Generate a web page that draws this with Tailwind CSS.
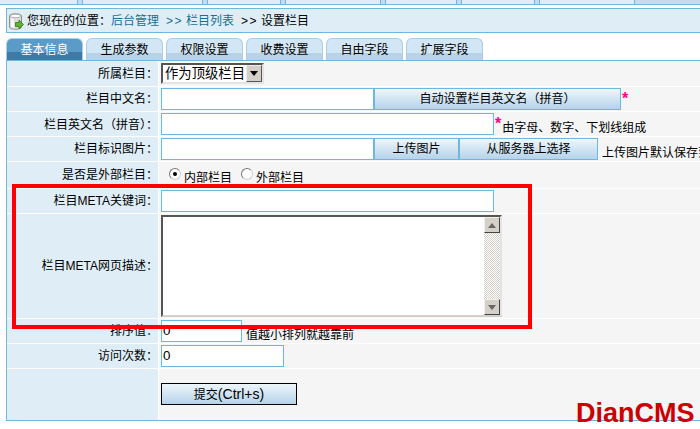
<!DOCTYPE html>
<html lang="zh-CN">
<head>
  <meta charset="UTF-8">
  <title>设置栏目</title>
  <script src="https://cdn.jsdelivr.net/npm/@tailwindcss/browser@4"></script>
</head>
<body class="relative w-[700px] h-[429px] overflow-hidden bg-white text-[12px] leading-[14px] text-black font-['Liberation_Sans','Noto_Sans_CJK_SC',sans-serif]">
  <!-- top frame strip -->
  <div class="flex h-[5px] border-b border-[#6cb8e0] bg-[#dfeef6]">
    <div class="w-[77px] h-[4px]"></div>
    <div class="w-[6px] h-[4px] bg-[#c5dcea] border-x border-[#6cb8e0]"></div>
    <div class="w-[119px] h-[4px]"></div>
    <div class="w-[6px] h-[4px] bg-[#c5dcea] border-x border-[#6cb8e0]"></div>
    <div class="w-[72px] h-[4px]"></div>
    <div class="w-[6px] h-[4px] bg-[#c5dcea] border-x border-[#6cb8e0]"></div>
    <div class="w-[94px] h-[4px]"></div>
    <div class="w-[6px] h-[4px] bg-[#c5dcea] border-x border-[#6cb8e0]"></div>
    <div class="w-[70px] h-[4px]"></div>
    <div class="w-[6px] h-[4px] bg-[#c5dcea] border-x border-[#6cb8e0]"></div>
    <div class="w-[72px] h-[4px]"></div>
    <div class="w-[6px] h-[4px] bg-[#c5dcea] border-x border-[#6cb8e0]"></div>
    <div class="w-[94px] h-[4px]"></div>
    <div class="flex-1 h-[4px] bg-[#c5dcea] border-l border-[#6cb8e0]"></div>
  </div>

  <!-- breadcrumb -->
  <div class="mt-[3px] ml-[6px] h-[25px] flex items-center border border-r-0 border-[#6cb8e0] bg-[#dfeef6] pl-[2px]">
    <svg width="18" height="18" viewBox="0 0 18 18" class="shrink-0 mt-[2px]">
      <path d="M.5 3c0-3 12-3 12 0v11c0 3-12 3-12 0z" fill="#dcdcdc" stroke="#8f8f8f"/>
      <path d="M2 5v9c1 1 2 1 3 1.300V6z" fill="#f7f7f7"/>
      <ellipse cx="6.500" cy="3" rx="5" ry="1.800" fill="#fff" stroke="#a0a0a0" stroke-width=".8"/>
      <path d="M6.500 9.500h3.500V7l4.500 4.500L10 16v-2.500H6.500z" fill="#62b032" stroke="#2f7a14" stroke-width=".8"/>
    </svg>
    <span>您现在的位置：</span>
    <a class="text-[#1a6e96]">后台管理</a>
    <span class="ml-[7px] text-[#1a6e96] tracking-[1.500px]">&gt;&gt;</span>
    <span class="ml-[3px] text-[#1a6e96]">栏目列表</span>
    <span class="ml-[7px] tracking-[1.500px]">&gt;&gt;</span>
    <span class="ml-[3px]">设置栏目</span>
  </div>

  <!-- tabs -->
  <div class="mt-[5px] ml-[6px] flex gap-[3px] h-[22px]">
    <div class="w-[77px] rounded-t-[6px] border border-b-0 border-[#a9cde4] bg-[linear-gradient(#5b9bc7_0,#5b9bc7_62%,#3e7aa5_62%,#3e7aa5_100%)] text-white text-center leading-[20px] pt-px">基本信息</div>
    <div class="w-[77px] rounded-t-[6px] border border-b-0 border-[#a9cde4] bg-[linear-gradient(#d3e6f5_0,#d3e6f5_65%,#b7d3e8_65%,#b7d3e8_100%)] text-center leading-[20px] pt-px">生成参数</div>
    <div class="w-[77px] rounded-t-[6px] border border-b-0 border-[#a9cde4] bg-[linear-gradient(#d3e6f5_0,#d3e6f5_65%,#b7d3e8_65%,#b7d3e8_100%)] text-center leading-[20px] pt-px">权限设置</div>
    <div class="w-[77px] rounded-t-[6px] border border-b-0 border-[#a9cde4] bg-[linear-gradient(#d3e6f5_0,#d3e6f5_65%,#b7d3e8_65%,#b7d3e8_100%)] text-center leading-[20px] pt-px">收费设置</div>
    <div class="w-[77px] rounded-t-[6px] border border-b-0 border-[#a9cde4] bg-[linear-gradient(#d3e6f5_0,#d3e6f5_65%,#b7d3e8_65%,#b7d3e8_100%)] text-center leading-[20px] pt-px">自由字段</div>
    <div class="w-[77px] rounded-t-[6px] border border-b-0 border-[#a9cde4] bg-[linear-gradient(#d3e6f5_0,#d3e6f5_65%,#b7d3e8_65%,#b7d3e8_100%)] text-center leading-[20px] pt-px">扩展字段</div>
  </div>

  <!-- form table -->
  <div class="ml-[6px] h-[361px] border border-r-0 border-[#6cb8e0] bg-white flex flex-col gap-px">
    <div class="flex h-[25px]">
      <div class="w-[151px] shrink-0 bg-[#dfeef6] mr-px flex items-center justify-end pt-px">所属栏目：</div>
      <div class="flex-1 bg-[#f5f5f5] pl-[2px] pt-[2px]">
        <div class="w-[103px] h-[21px] flex items-center border-2 border-t-[#555] border-l-[#555] border-r-[#e4e4e4] border-b-[#e4e4e4] bg-white pl-[2px] text-[13.330px]">
          <span class="flex-1 whitespace-nowrap">作为顶级栏目</span>
          <span class="w-[16px] h-[17px] shrink-0 bg-[#d4d0c8] border border-[#555] border-t-[#eee] border-l-[#eee] flex items-center justify-center">
            <svg width="8" height="5" viewBox="0 0 8 5"><path d="M0 0h8L4 5z" fill="#000"/></svg>
          </span>
        </div>
      </div>
    </div>
    <div class="flex h-[24px]">
      <div class="w-[151px] shrink-0 bg-[#dfeef6] mr-px flex items-center justify-end">栏目中文名：</div>
      <div class="flex-1 bg-[#f5f5f5] pl-[2px] pt-px flex items-start">
        <div class="w-[213px] h-[22px] border border-[#6cb8e0] bg-white"></div>
        <div class="w-[247px] h-[22px] border border-[#6cb8e0] bg-[linear-gradient(#eef6fb,#b5d3ea)] text-center leading-[20px]">自动设置栏目英文名（拼音）</div>
        <span class="ml-px pt-[4px] text-[16px] font-bold text-[#ff0080]">*</span>
      </div>
    </div>
    <div class="flex h-[24px]">
      <div class="w-[151px] shrink-0 bg-[#dfeef6] mr-px flex items-center justify-end pt-px">栏目英文名（拼音）：</div>
      <div class="flex-1 bg-[#f5f5f5] pl-[2px] pt-px flex items-start">
        <div class="w-[333px] h-[22px] border border-[#6cb8e0] bg-white"></div>
        <span class="ml-px pt-[4px] text-[16px] font-bold text-[#ff0080]">*</span>
        <span class="ml-px pt-[8px]">由字母、数字、下划线组成</span>
      </div>
    </div>
    <div class="flex h-[24px]">
      <div class="w-[151px] shrink-0 bg-[#dfeef6] mr-px flex items-center justify-end">栏目标识图片：</div>
      <div class="flex-1 bg-[#f5f5f5] pl-[2px] pt-px flex items-start whitespace-nowrap">
        <div class="w-[213px] h-[22px] shrink-0 border border-[#6cb8e0] bg-white"></div>
        <div class="w-[85px] h-[22px] shrink-0 border border-[#6cb8e0] bg-[linear-gradient(#eef6fb,#b5d3ea)] text-center leading-[20px]">上传图片</div>
        <div class="w-[139px] h-[22px] shrink-0 border border-[#6cb8e0] bg-[linear-gradient(#eef6fb,#b5d3ea)] text-center leading-[20px]">从服务器上选择</div>
        <span class="ml-[4px] pt-[8px]">上传图片默认保存到</span>
      </div>
    </div>
    <div class="flex h-[26px]">
      <div class="w-[151px] shrink-0 bg-[#dfeef6] mr-px flex items-center justify-end">是否是外部栏目：</div>
      <div class="flex-1 bg-[#f5f5f5] pl-[10px] pt-[6px] flex items-start">
        <span class="w-[12px] h-[12px] rounded-full bg-white border border-[#777] border-r-[#ccc] border-b-[#ccc] flex items-center justify-center"><span class="w-[4px] h-[4px] rounded-full bg-black"></span></span>
        <span class="ml-[3px] pt-[3px]">内部栏目</span>
        <span class="ml-[9px] w-[12px] h-[12px] rounded-full bg-white border border-[#777] border-r-[#ccc] border-b-[#ccc]"></span>
        <span class="ml-[3px] pt-[3px]">外部栏目</span>
      </div>
    </div>
    <div class="flex h-[24px]">
      <div class="w-[151px] shrink-0 bg-[#dfeef6] mr-px flex items-center justify-end">栏目META关键词：</div>
      <div class="flex-1 bg-[#f5f5f5] pl-[2px] pt-px"><div class="w-[333px] h-[22px] border border-[#6cb8e0] bg-white"></div></div>
    </div>
    <div class="flex h-[104px]">
      <div class="w-[151px] shrink-0 bg-[#dfeef6] mr-px flex items-center justify-end">栏目META网页描述：</div>
      <div class="flex-1 bg-[#f5f5f5] pl-[2px] pt-px">
        <div class="w-[341px] h-[102px] flex border-2 border-t-[#555] border-l-[#555] border-r-[#e4e4e4] border-b-[#d4d0c8] bg-white justify-end">
          <div class="w-[16px] flex flex-col bg-[repeating-conic-gradient(#d4d0c8_0_25%,#fff_0_50%)] bg-[length:2px_2px]">
            <span class="h-[16px] bg-[#d4d0c8] border border-[#444] border-t-[#eee] border-l-[#eee] flex items-center justify-center">
              <svg width="8" height="5" viewBox="0 0 8 5"><path d="M4 0l4 5H0z" fill="#666"/></svg>
            </span>
            <span class="flex-1"></span>
            <span class="h-[16px] bg-[#d4d0c8] border border-[#444] border-t-[#eee] border-l-[#eee] flex items-center justify-center">
              <svg width="8" height="5" viewBox="0 0 8 5"><path d="M0 0h8L4 5z" fill="#666"/></svg>
            </span>
          </div>
        </div>
      </div>
    </div>
    <div class="flex h-[24px]">
      <div class="w-[151px] shrink-0 bg-[#dfeef6] mr-px flex items-center justify-end">排序值：</div>
      <div class="flex-1 bg-[#f5f5f5] pl-[2px] pt-px flex items-start">
        <div class="w-[81px] h-[22px] border border-[#6cb8e0] bg-white pl-px leading-[20px] text-[13.330px]">0</div>
        <span class="ml-[4px] pt-[8px]">值越小排列就越靠前</span>
      </div>
    </div>
    <div class="flex h-[24px]">
      <div class="w-[151px] shrink-0 bg-[#dfeef6] mr-px flex items-center justify-end">访问次数：</div>
      <div class="flex-1 bg-[#f5f5f5] pl-[2px] pt-px"><div class="w-[123px] h-[22px] border border-[#6cb8e0] bg-white pl-px leading-[20px] text-[13.330px]">0</div></div>
    </div>
    <div class="flex flex-1">
      <div class="w-[151px] shrink-0 bg-[#dfeef6] mr-px"></div>
      <div class="flex-1 bg-[#f5f5f5] pl-[2px] pt-[14px]">
        <div class="w-[136px] h-[22px] border border-black bg-[linear-gradient(#eef6fb,#b5d3ea)] text-center leading-[20px]">提交<span class="text-[14px]">(Ctrl+s)</span></div>
      </div>
    </div>
  </div>

  <!-- annotation overlaid on the screenshot -->
  <div class="absolute left-[12px] top-[184px] w-[520px] h-[145px] border-4 border-[#ff0000]"></div>
  <div class="absolute left-[576px] top-[398px] text-[27px] leading-[31px] font-bold text-[#cc0000]">DianCMS</div>
</body>
</html>
